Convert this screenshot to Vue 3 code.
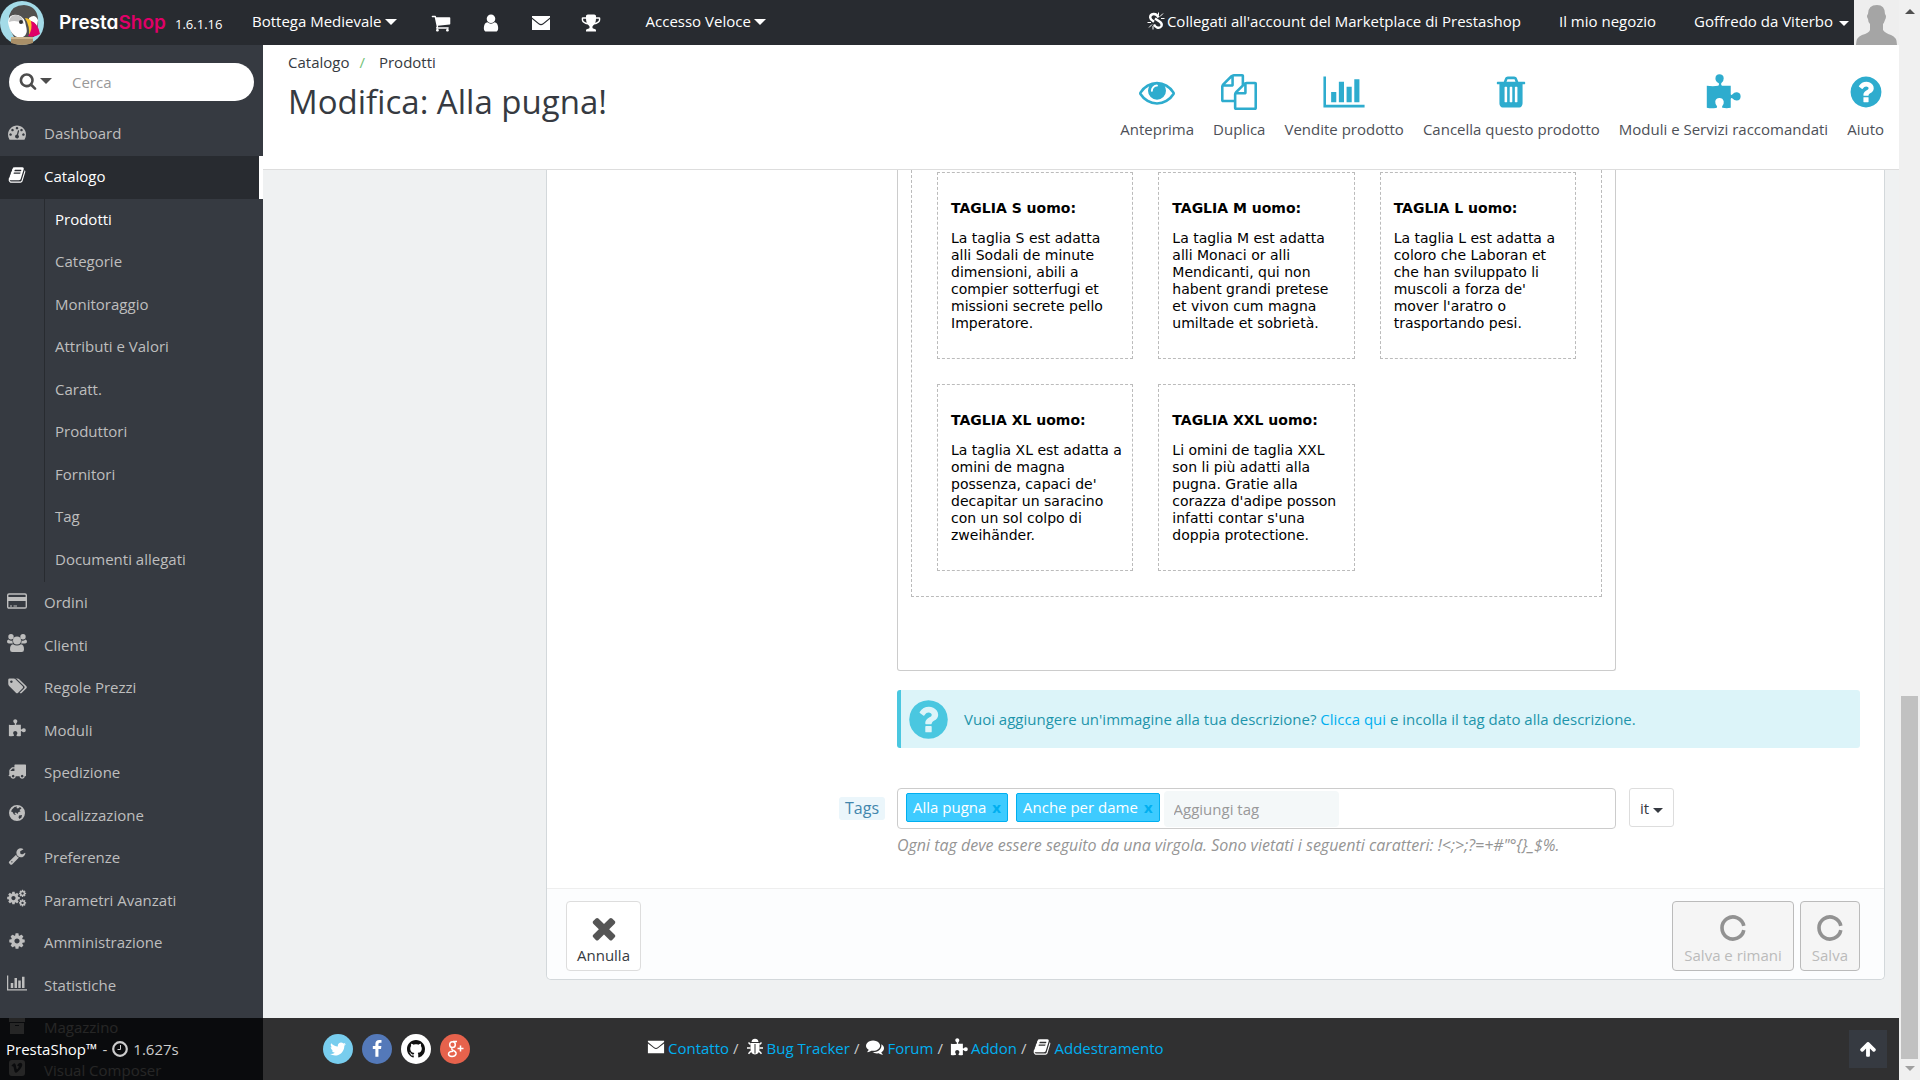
<template>
  <div class="window">
    <div class="page">
      <header class="header">
        <a href="#" class="brand">
          <svg class="puffin" viewBox="0 0 45 45">
            <circle cx="22" cy="23" r="22" fill="#a4dbe8" />
            <path d="M9 16Q12 5 24 5Q37 6 38 19Q39 30 34 37H14Q8 28 9 16z" fill="#51504f" />
            <path d="M8 22Q9 13 18 15Q25 17 26 26Q29 36 20 38Q10 36 8 22z" fill="#fff" />
            <path d="M9 22Q10 14 17 15Q23 16 24 24Q16 19 9 22z" fill="#c4c4c4" />
            <path d="M29 18Q35 13 38 20L37 27Q33 20 29 22z" fill="#fff" />
            <circle cx="21" cy="22" r="2" fill="#333" />
            <path d="M25 18Q31 18 33 25Q34 31 29 36Q30 26 25 18z" fill="#f7c32e" />
            <path d="M31 21Q38 23 40 34Q34 38 28 36Q33 30 31 21z" fill="#df0067" />
            <path d="M11 37H33V43Q22 47 11 43z" fill="#a98f68" />
            <path d="M11 37H33V39H11z" fill="#cbb48c" />
          </svg>
          <span class="wordmark">Presta<b>Shop</b></span>
        </a>
        <span class="version">1.6.1.16</span>
        <a href="#" class="shop">Bottega Medievale<i class="caret"></i></a>
        <nav class="notifs">
          <a v-for="n in ['cart', 'user', 'envelope', 'trophy']" :key="n" href="#"><Icon :name="n" class="ic20" /></a>
        </nav>
        <a href="#" class="quick">Accesso Veloce<i class="caret"></i></a>
        <a href="#" class="market"><Icon name="unlink" class="ic18" />Collegati all'account del Marketplace di Prestashop</a>
        <a href="#" class="myshop">Il mio negozio</a>
        <a href="#" class="employee">Goffredo da Viterbo<i class="caret small"></i></a>
        <svg class="avatar" viewBox="0 0 45 45">
          <path fill="#eee" d="M0 0h45v45H0z" />
          <path fill="#a5a5a5" d="M23 5q8 0 8 9q2 2 0 6q-1 3-2 4v6q2 3 8 5q6 2 6 10H2q0-8 6-10q7-2 8-5v-6q-2-2-2-5q-2-3 0-5q0-9 9-9z" />
        </svg>
      </header>

      <div class="body">
        <aside class="sidebar">
          <form class="search" @submit.prevent>
            <button type="button" aria-label="Filtro"><Icon name="search" class="ic18" /><i class="caret"></i></button>
            <input type="text" placeholder="Cerca" aria-label="Cerca" />
          </form>
          <ul class="menu top">
            <li><a href="#"><Icon name="dashboard" class="menu-icon" />Dashboard</a></li>
            <li class="active"><a href="#"><Icon name="book" class="menu-icon" />Catalogo</a></li>
          </ul>
          <ul class="submenu">
            <li v-for="(s, i) in submenu" :key="s" :class="{ current: i === 0 }"><a href="#">{{ s }}</a></li>
          </ul>
          <ul class="menu">
            <li v-for="m in menu" :key="m.label"><a href="#"><Icon :name="m.icon" class="menu-icon" />{{ m.label }}</a></li>
          </ul>
        </aside>

        <main class="main">
          <div class="page-head">
            <div class="heading">
              <div class="breadcrumb"><a href="#">Catalogo</a><span class="sep">/</span><a href="#">Prodotti</a></div>
              <h1>Modifica: Alla pugna!</h1>
            </div>
            <div class="toolbar">
              <a v-for="t in toolbar" :key="t.label" href="#">
                <Icon :name="t.icon" class="tool-icon" />
                <span>{{ t.label }}</span>
              </a>
            </div>
          </div>

          <form class="panel" @submit.prevent>
            <div class="row">
              <div class="editor">
                <div class="sizes">
                  <div v-for="s in sizes" :key="s.title" class="size">
                    <h3>{{ s.title }}</h3>
                    <p>{{ s.text }}</p>
                  </div>
                </div>
              </div>
            </div>

            <div class="alert">
              <Icon name="question" class="alert-icon" />
              <p>Vuoi aggiungere un'immagine alla tua descrizione? <a href="#">Clicca qui</a> e incolla il tag dato alla descrizione.</p>
            </div>

            <div class="row tags-row">
              <div class="label-cell"><label for="tags">Tags</label></div>
              <div class="tags-field">
                <span v-for="t in tags" :key="t" class="tag">{{ t }}<button type="button" @click="removeTag(t)">x</button></span>
                <input id="tags" type="text" placeholder="Aggiungi tag" />
              </div>
              <button type="button" class="lang">it<i class="caret small"></i></button>
            </div>
            <p class="help">Ogni tag deve essere seguito da una virgola. Sono vietati i seguenti caratteri: !&lt;;&gt;;?=+#"°{}_$%.</p>

            <div class="panel-footer">
              <button type="button" class="btn"><Icon name="times" class="btn-icon" />Annulla</button>
              <div class="save">
                <button type="submit" class="btn" disabled><Icon name="spinner" class="btn-icon" />Salva e rimani</button>
                <button type="submit" class="btn" disabled><Icon name="spinner" class="btn-icon" />Salva</button>
              </div>
            </div>
          </form>
        </main>
      </div>

      <footer class="footer">
        <div class="timing"><strong>PrestaShop™</strong> - <Icon name="clock" class="ic16" /> 1.627s</div>
        <div class="social">
          <a v-for="s in social" :key="s" href="#" :class="s" :aria-label="s"><Icon :name="s" class="social-icon" /></a>
        </div>
        <nav class="links">
          <template v-for="(l, i) in links" :key="l.label">
            <span v-if="i" class="slash">/</span>
            <Icon :name="l.icon" class="ic18" /><a href="#">{{ l.label }}</a>
          </template>
        </nav>
        <button type="button" class="go-top" aria-label="Torna su"><Icon name="arrowUp" class="ic18" /></button>
      </footer>
    </div>

    <div class="scrollbar">
      <i class="arrow up"></i>
      <div class="thumb"></div>
      <i class="arrow down"></i>
    </div>
  </div>
</template>

<script setup>
import { h, ref } from 'vue'

const cog = 'M1152 896q0-106-75-181t-181-75-181 75-75 181 75 181 181 75 181-75 75-181zm512-109v222q0 12-8 23t-20 13l-185 28q-19 54-39 91 35 50 107 138 10 12 10 25t-9 23q-27 37-99 108t-94 71q-12 0-26-9l-138-108q-44 23-91 38-16 136-29 186-7 28-36 28h-222q-14 0-24.5-8.5t-11.5-21.5l-28-184q-49-16-90-37l-141 107q-10 9-25 9-14 0-25-11-126-114-165-168-7-10-7-23 0-12 8-23 15-21 51-66.5t54-70.5q-27-50-41-99l-183-27q-13-2-21-12.5t-8-23.5v-222q0-12 8-23t19-13l186-28q14-46 39-92-40-57-107-138-10-12-10-24 0-10 9-23 26-36 98.5-107.5t94.5-71.5q13 0 26 10l138 107q44-23 91-38 16-136 29-186 7-28 36-28h222q14 0 24.5 8.5t11.5 21.5l28 184q49 16 90 37l142-107q9-9 24-9 13 0 25 10 129 119 165 170 7 8 7 22 0 12-8 23-15 21-51 66.5t-54 70.5q26 50 41 98l183 28q13 2 21 12.5t8 23.5z'

// box: viewBox, d: filled shape, s: stroked shape, w: stroke width
const icons = {
  cart: { d: 'M704 1536q0 52-38 90t-90 38-90-38-38-90 38-90 90-38 90 38 38 90zm896 0q0 52-38 90t-90 38-90-38-38-90 38-90 90-38 90 38 38 90zm128-1088v512q0 24-16.5 42.5t-40.5 21.5l-1044 122q13 60 13 70 0 16-24 64h920q26 0 45 19t19 45-19 45-45 19h-1024q-26 0-45-19t-19-45q0-11 8-31.5t16-36 21.5-40 15.5-29.5l-177-823h-204q-26 0-45-19t-19-45 19-45 45-19h256q16 0 28.5 6.5t19.5 15.5 13 24.5 8 26 5.5 29.5 4.5 26h1201q26 0 45 19t19 45z' },
  user: { d: 'M1536 1399q0 109-62.5 187t-150.5 78h-854q-88 0-150.5-78t-62.5-187q0-85 8.5-160.5t31.5-152 58.5-131 94-89 134.5-34.5q131 128 313 128t313-128q76 0 134.5 34.5t94 89 58.5 131 31.5 152 8.5 160.5zm-256-887q0 159-112.5 271.5t-271.5 112.5-271.5-112.5-112.5-271.5 112.5-271.5 271.5-112.5 271.5 112.5 112.5 271.5z' },
  envelope: { box: '0 0 20 20', d: 'M1 3H19V4.5L12 10.2Q10 11.8 8 10.2L1 4.5zM1 6L7.5 11.2Q10 13.2 12.5 11.2L19 6V17H1z' },
  trophy: { d: 'M522 883q-74-162-74-371h-256v96q0 78 94.5 162t235.5 113zm1078-275v-96h-256q0 209-74 371 141-29 235.5-113t94.5-162zm128-128v128q0 71-41.5 143t-112 130-173 97.5-215.5 44.5q-42 54-95 95-38 34-52.5 72.5t-14.5 89.5q0 54 30.5 91t97.5 37q75 0 133.5 45.5t58.5 114.5v64q0 14-9 23t-23 9h-832q-14 0-23-9t-9-23v-64q0-69 58.5-114.5t133.5-45.5q67 0 97.5-37t30.5-91q0-51-14.5-89.5t-52.5-72.5q-53-41-95-95-113-5-215.5-44.5t-173-97.5-112-130-41.5-143v-128q0-40 28-68t68-28h288v-96q0-66 47-113t113-47h576q66 0 113 47t47 113v96h288q40 0 68 28t28 68z' },
  unlink: { box: '0 0 18 18', s: 'M11.500 5.500Q10 1.800 6.500 2Q3 2.500 3.200 5.500Q3.500 7.500 6 9L7 9.800M8 6.500L12.500 9.500Q15.500 11.500 14.500 14Q13 16.500 10 15.500Q8 14.500 7 12.500', w: 2.4, s2: 'M11.500 3.500V0.500M13 4.500L16 1.500M14 6.500H17.500M6 14V17.500M5 12.500L2 15.500M4 10.500H0.500' },
  search: { d: 'M1216 832q0-185-131.5-316.5t-316.5-131.5-316.5 131.5-131.5 316.5 131.5 316.5 316.5 131.5 316.5-131.5 131.5-316.5zm512 832q0 52-38 90t-90 38q-54 0-90-38l-343-342q-179 124-399 124-143 0-273.5-55.5t-225-150-150-225-55.5-273.5 55.5-273.5 150-225 225-150 273.5-55.5 273.5 55.5 225 150 150 225 55.5 273.5q0 220-124 399l343 343q37 37 37 90z' },
  dashboard: { d: 'M384 1152q0-53-37.5-90.5t-90.5-37.5-90.5 37.5-37.5 90.5 37.5 90.5 90.5 37.5 90.5-37.5 37.5-90.5zm192-448q0-53-37.5-90.5t-90.5-37.5-90.5 37.5-37.5 90.5 37.5 90.5 90.5 37.5 90.5-37.5 37.5-90.5zm428 481l101-382q6-26-7.5-48.5t-38.5-29.5-48 6.5-30 39.5l-101 382q-60 5-107 43.5t-63 98.5q-20 77 20 146t117 89 146-20 89-117q16-60-6-117t-72-91zm660-33q0-53-37.5-90.5t-90.5-37.5-90.5 37.5-37.5 90.5 37.5 90.5 90.5 37.5 90.5-37.5 37.5-90.5zm-640-640q0-53-37.5-90.5t-90.5-37.5-90.5 37.5-37.5 90.5 37.5 90.5 90.5 37.5 90.5-37.5 37.5-90.5zm448 192q0-53-37.5-90.5t-90.5-37.5-90.5 37.5-37.5 90.5 37.5 90.5 90.5 37.5 90.5-37.5 37.5-90.5zm320 448q0 261-141 483-19 29-54 29h-1402q-35 0-54-29-141-221-141-483 0-182 71-348t191-286 286-191 348-71 348 71 286 191 191 286 71 348z' },
  book: { d: 'M1703 478q40 57 18 129l-275 906q-19 64-76.5 107.5t-122.5 43.5h-923q-77 0-148.5-53.5t-99.5-131.5q-24-67-2-127 0-4 3-27t4-37q1-8-3-21.5t-3-19.5q2-11 8-21t16.5-23.5 16.5-23.5q23-38 45-91.5t30-91.5q3-10 .5-30t-.5-28q3-11 17-28t17-23q21-36 42-92t25-90q1-9-2.5-32t.5-28q4-13 22-30.5t22-22.5q19-26 42.5-84.5t27.5-96.5q1-8-3-25.5t-2-26.5q2-8 9-18t18-23 17-21q8-12 16.5-30.5t15-35 16-36 19.5-32 26.5-23.5 36-11.5 47.5 5.5l-1 3q38-9 51-9h761q74 0 114 56t18 130l-274 906q-36 119-71.5 153.5t-128.5 34.5h-869q-27 0-38 15-11 16-1 43 24 70 144 70h923q29 0 56-15.5t35-41.5l300-987q7-22 5-57 38 15 59 43zm-1064 2q-4 13 2 22.5t20 9.5h608q13 0 25.5-9.5t16.5-22.5l21-64q4-13-2-22.5t-20-9.5h-608q-13 0-25.5 9.5t-16.5 22.5zm-83 256q-4 13 2 22.500t20 9.500h608q13 0 25.500-9.500t16.500-22.500l21-64q4-13-2-22.500t-20-9.500h-608q-13 0-25.500 9.500t-16.500 22.500z' },
  card: { box: '0 0 20 18', d: 'M1 5H19V9H1zM3 13.500H5V14.500H3zM6.500 13.500H10V14.500H6.500z', s: 'M2 2H18Q19.300 2 19.300 3.300V14.700Q19.300 16 18 16H2Q.7 16 .7 14.700V3.300Q.7 2 2 2z', w: 1.4 },
  group: { box: '0 0 20 18', d: 'M10 2.500a4 4 0 1 1 0 8a4 4 0 1 1 0-8zM4 0a2.700 2.700 0 1 1 0 5.400a2.700 2.700 0 1 1 0-5.400zM16 0a2.700 2.700 0 1 1 0 5.400a2.700 2.700 0 1 1 0-5.400zM1.500 5.500Q4 7.500 5.500 6.200Q5.200 8 6 9.500H2Q0 9.500 0 7.800Q0 6 1.500 5.500zM18.500 5.500Q16 7.500 14.500 6.200Q14.800 8 14 9.500H18Q20 9.500 20 7.800Q20 6 18.500 5.500zM6 10.200Q10 13 14 10.200Q17 10.500 17 15.500Q17 18 14.700 18H5.300Q3 18 3 15.500Q3 10.500 6 10.200z' },
  tags: { box: '0 0 2048 1792', d: 'M576 448q0-53-37.500-90.500t-90.500-37.500-90.500 37.500-37.500 90.500 37.500 90.500 90.500 37.500 90.500-37.500 37.500-90.500zm1067 576q0 53-37 90l-491 492q-39 37-91 37-53 0-90-37l-715-716q-38-37-64.500-101t-26.500-117v-416q0-52 38-90t90-38h416q53 0 117 26.500t102 64.500l715 714q37 39 37 91zm384 0q0 53-37 90l-491 492q-39 37-91 37-36 0-59-14t-53-45l470-470q37-37 37-90 0-52-37-91l-715-714q-38-38-102-64.500t-117-26.500h224q53 0 117 26.500t102 64.500l715 714q37 39 37 91z' },
  puzzle: { box: '0 0 20 20', d: 'M7.300 6.500Q8 6.500 7.700 5.200Q5.600 3.800 5.800 2.300Q6 .2 8 .2Q10.200 .2 10.400 2.300Q10.500 3.900 9 5.200Q8.800 6.500 9.500 6.500H14.300V11.200Q14.500 12 15.300 11.300Q16.300 10 17.800 10.200Q19.800 10.400 19.800 12.500Q19.700 14.600 17.700 14.700Q16.300 14.800 15.300 13.600Q14.500 13 14.300 13.900V18.800Q12 19.300 9.800 18.800Q9 18.600 9.700 17.600Q10.600 16.600 10.400 15.300Q10 13.400 8 13.400Q5.900 13.500 5.700 15.300Q5.600 16.500 6.500 17.600Q7.200 18.700 6 18.900Q3.500 19.300 1 18.800V6.500Q4.500 7 7.300 6.500z' },
  truck: { d: 'M640 1408q0-52-38-90t-90-38-90 38-38 90 38 90 90 38 90-38 38-90zm-384-512h384v-256h-158q-13 0-22 9l-195 195q-9 9-9 22v30zm1280 512q0-52-38-90t-90-38-90 38-38 90 38 90 90 38 90-38 38-90zm256-1088v1024q0 15-4 26.500t-13.500 18.500-16.500 11.500-23.500 6-22.500 2-25.500 0-22.500-.5q0 106-75 181t-181 75-181-75-75-181h-384q0 106-75 181t-181 75-181-75-75-181h-64q-3 0-22.500.5t-25.500 0-22.500-2-23.500-6-16.500-11.500-13.500-18.500-4-26.500q0-26 19-45t45-19v-320q0-8-.5-35t0-38 2.500-34.500 6.500-37 14-30.500 22.500-30l198-198q19-19 50.500-32t58.500-13h160v-192q0-26 19-45t45-19h1024q26 0 45 19t19 45z' },
  globe: { box: '0 0 18 18', rule: 'evenodd', d: 'M9 1a8 8 0 1 1 0 16a8 8 0 1 1 0-16zM6.500 3L9 2.500L8.500 4L10 4.500L12 3L13.500 4.500L11.500 6L12.500 7.500L10.500 8L9.500 10L8 8.500L6.500 9L8 11L6 10.500L4.500 8L3 7.500L4 5.500zM11 11.500L14 11L13.500 13.500L11.500 15L10.500 13.500z' },
  wrench: { d: 'M448 1472q0-26-19-45t-45-19-45 19-19 45 19 45 45 19 45-19 19-45zm644-420l-682 682q-37 37-90 37-52 0-91-37l-106-108q-38-36-38-90 0-53 38-91l681-681q39 98 114.500 173.500t173.500 114.500zm634-435q0 39-23 106-47 134-164.500 217.500t-258.500 83.500q-185 0-316.500-131.500t-131.500-316.500 131.500-316.500 316.500-131.500q58 0 121.500 16.500t107.500 46.500q16 11 16 28t-16 28l-293 169v224l193 107q5-3 79-48.500t135.500-81 70.500-35.500q15 0 23.500 10t8.500 25z' },
  cog: { d: cog },
  cogs: { box: '0 0 2048 1792', parts: [[cog, 'translate(-90 150) scale(.84)'], [cog, 'translate(1160 0) scale(.48)'], [cog, 'translate(1160 960) scale(.48)']] },
  chart: { box: '0 0 2048 1792', d: 'M640 896v512h-256v-512h256zm384-512v1024h-256v-1024h256zm1024 1152v128h-2048v-1536h128v1408h1920zm-640-896v768h-256v-768h256zm384-384v1152h-256v-1152h256z' },
  archive: { box: '0 0 18 18', rule: 'evenodd', d: 'M1 1H17V5H1zM2 6H16V17H2zM7 8V9H11V8z' },
  vimeo: { box: '0 0 18 18', rule: 'evenodd', d: 'M4 1H14Q17 1 17 4V14Q17 17 14 17H4Q1 17 1 14V4Q1 1 4 1zM3.500 6.500L4 7.500Q5 6.800 5.500 8L6.500 12.500Q7.500 15 10 12.500Q14.500 8 14.300 5.500Q13.500 2.500 10 5Q9.300 6 9.300 7Q11.500 6.500 10.500 8.500Q9 11.500 8.500 9.500L7.800 6Q7 3 5 5z' },
  clock: { box: '0 0 16 16', s: 'M8 1.200a6.800 6.800 0 1 1 0 13.600a6.800 6.800 0 1 1 0-13.600z', w: 2.2, s2: 'M8.500 4V8.500H5.500' },
  eye: { d: 'M1664 960q-152-236-381-353 61 104 61 225 0 185-131.500 316.500t-316.500 131.500-316.500-131.500-131.500-316.500q0-121 61-225-229 117-381 353 133 205 333.500 326.500t434.500 121.500 434.500-121.500 333.500-326.500zm-720-384q0-20-14-34t-34-14q-125 0-214.500 89.500t-89.500 214.500q0 20 14 34t34 14 34-14 14-34q0-86 61-147t147-61q20 0 34-14t14-34zm848 384q0 34-20 69-140 230-376.500 368.500t-499.500 138.500-499.500-139-376.500-368q-20-35-20-69t20-69q140-229 376.500-368t499.500-139 499.500 139 376.500 368q20 35 20 69z' },
  files: { d: 'M1696 384q40 0 68 28t28 68v1216q0 40-28 68t-68 28h-960q-40 0-68-28t-28-68v-288h-544q-40 0-68-28t-28-68v-672q0-40 20-88t48-76l408-408q28-28 76-48t88-20h416q40 0 68 28t28 68v328q68-40 128-40h416zm-544 213l-299 299h299v-299zm-640-384l-299 299h299v-299zm196 647l316-316v-416h-384v416q0 40-28 68t-68 28h-416v640h512v-256q0-40 20-88t48-76zm956 804v-1152h-384v416q0 40-28 68t-68 28h-416v640h896z' },
  trash: { d: 'M704 1376v-704q0-14-9-23t-23-9h-64q-14 0-23 9t-9 23v704q0 14 9 23t23 9h64q14 0 23-9t9-23zm256 0v-704q0-14-9-23t-23-9h-64q-14 0-23 9t-9 23v704q0 14 9 23t23 9h64q14 0 23-9t9-23zm256 0v-704q0-14-9-23t-23-9h-64q-14 0-23 9t-9 23v704q0 14 9 23t23 9h64q14 0 23-9t9-23zm-544-992h448l-48-117q-7-9-17-11h-317q-10 2-17 11zm928 32v64q0 14-9 23t-23 9h-96v948q0 83-47 143.500t-113 60.500h-832q-66 0-113-58.500t-47-141.500v-952h-96q-14 0-23-9t-9-23v-64q0-14 9-23t23-9h309l70-167q15-37 54-63t79-26h320q40 0 79 26t54 63l70 167h309q14 0 23 9t9 23z' },
  question: { d: 'M1024 1376v-192q0-14-9-23t-23-9h-192q-14 0-23 9t-9 23v192q0 14 9 23t23 9h192q14 0 23-9t9-23zm256-672q0-88-55.500-163t-138.500-116-170-41q-243 0-371 213-15 24 8 42l132 100q7 6 19 6 16 0 25-12 53-68 86-92 34-24 86-24 48 0 85.500 26t37.500 59q0 38-20 61t-68 45q-63 28-115.500 86.500t-52.500 125.500v36q0 14 9 23t23 9h192q14 0 23-9t9-23q0-19 21.500-49.500t54.500-49.500q32-18 49-28.500t46-35 44.500-48 28-60.500 12.500-81zm384 192q0 209-103 385.500t-279.500 279.500-385.500 103-385.500-103-279.500-279.500-103-385.500 103-385.500 279.500-279.500 385.500-103 385.500 103 279.500 279.500 103 385.500z' },
  times: { d: 'M1490 1322q0 40-28 68l-136 136q-28 28-68 28t-68-28l-294-294-294 294q-28 28-68 28t-68-28l-136-136q-28-28-28-68t28-68l294-294-294-294q-28-28-28-68t28-68l136-136q28-28 68-28t68 28l294 294 294-294q28-28 68-28t68 28l136 136q28 28 28 68t-28 68l-294 294 294 294q28 28 28 68z' },
  spinner: { box: '0 0 34 34', s: 'M27.800 14.900A11 11 0 1 0 27.800 19.100', w: 3.6 },
  bug: { box: '0 0 18 18', rule: 'evenodd', d: 'M5.500 4Q6 .8 9 .8Q12 .8 12.500 4zM4.500 5H13.500V11Q13.300 16 9 16.500Q4.700 16 4.500 11zM8.500 6V15.500H9.500V6z', s: 'M4.500 6.500L2.500 4.500M13.500 6.500L15.500 4.500M4.500 10H1M13.500 10H17M5 13L2.500 15.800M13 13L15.500 15.800', w: 1.5 },
  comments: { d: 'M1408 768q0 139-94 257t-256.500 186.500-353.500 68.500q-86 0-176-16-124 88-278 128-36 9-86 16h-3q-11 0-20.500-8t-11.500-21q-1-3-1-6.500t.5-6.500 2-6l2.500-5 3.500-5.500 4-5 4.500-5 4-4.500q5-6 23-25t26-29.500 22.500-29 25-38.500 20.500-44q-124-72-195-177t-71-224q0-139 94-257t256.500-186.500 353.500-68.500 353.500 68.500 256.500 186.500 94 257zm384 256q0 120-71 224.500t-195 176.500q10 24 20.500 44t25 38.500 22.500 29 26 29.500 23 25q1 1 4 4.500t4.500 5 4 5 3.500 5.500l2.500 5 2 6 .5 6.500-1 6.500q-3 14-13 22t-22 7q-50-7-86-16-154-40-278-128-90 16-176 16-271 0-472-132 58 4 88 4 161 0 309-45t264-129q125-92 192-212t67-254q0-77-23-152 129 71 204 178t75 230z' },
  arrowUp: { d: 'M1675 971q0 51-37 90l-75 75q-38 38-91 38-54 0-90-38l-294-293v704q0 52-37.500 84.500t-90.500 32.500h-128q-53 0-90.500-32.500t-37.500-84.500v-704l-294 293q-36 38-90 38t-90-38l-75-75q-38-38-38-90 0-53 38-91l651-651q35-37 90-37 54 0 91 37l651 651q37 39 37 91z' },
  twitter: { d: 'M1684 408q-67 98-162 167 1 14 1 42 0 130-38 259.500t-115.500 248.500-184.500 210.500-258 146-323 54.500q-271 0-496-145 35 4 78 4 225 0 401-138-105-2-188-64.500t-114-159.500q33 5 61 5 43 0 85-11-112-23-185.500-111.500t-73.500-205.500v-4q68 38 146 41-66-44-105-115t-39-154q0-88 44-163 121 149 294.500 238.500t371.500 99.500q-8-38-8-74 0-134 94.500-228.500t228.500-94.500q140 0 236 102 109-21 205-78-37 115-142 178 93-10 186-50z' },
  facebook: { d: 'M1343 12v264h-157q-86 0-116 36t-30 108v189h293l-39 296h-254v759h-306v-759h-255v-296h255v-218q0-186 104-288.500t277-102.500q147 0 228 12z' },
  github: { box: '0 0 16 16', d: 'M8 0C3.580 0 0 3.580 0 8c0 3.540 2.290 6.530 5.470 7.590.4.070.55-.17.55-.38 0-.19-.01-.82-.01-1.490-2.010.37-2.530-.49-2.690-.94-.09-.23-.48-.94-.82-1.130-.28-.15-.68-.52-.01-.53.63-.01 1.080.58 1.230.82.72 1.210 1.870.87 2.330.66.07-.52.28-.87.51-1.070-1.780-.2-3.640-.89-3.640-3.950 0-.87.31-1.590.82-2.150-.08-.2-.36-1.020.08-2.120 0 0 .67-.21 2.200.82.64-.18 1.320-.27 2-.27s1.360.09 2 .27c1.530-1.040 2.200-.82 2.200-.82.44 1.100.16 1.920.08 2.120.51.56.82 1.270.82 2.150 0 3.070-1.870 3.750-3.650 3.950.29.25.54.73.54 1.480 0 1.070-.01 1.930-.01 2.200 0 .21.15.46.55.38A8.010 8.010 0 0 0 16 8c0-4.420-3.580-8-8-8z' },
  google: { box: '0 0 18 18', s: 'M6.500 1.800Q9.300 1.800 9.300 4.700Q9.300 7.500 6.500 7.500Q3.700 7.500 3.700 4.700Q3.700 1.800 6.500 1.800zM7 1.500H11M6 8Q5 9.500 7.500 10.500Q10.500 12 10 14Q9.300 16.500 6 16.500Q2.500 16.300 2.500 14Q2.700 11.500 7 11.300M14.500 5.500V11.500M11.500 8.500H17.500', w: 1.5 }
}

const Icon = (props) => {
  const i = icons[props.name]
  const kids = []
  if (i.d) kids.push(h('path', { d: i.d, fill: 'currentColor', 'fill-rule': i.rule }))
  if (i.s) kids.push(h('path', { d: i.s, fill: 'none', stroke: 'currentColor', 'stroke-width': i.w }))
  if (i.s2) kids.push(h('path', { d: i.s2, fill: 'none', stroke: 'currentColor', 'stroke-width': 1 }))
  for (const [d, transform] of i.parts || []) kids.push(h('path', { d, transform, fill: 'currentColor' }))
  return h('svg', { viewBox: i.box || '0 0 1792 1792', 'aria-hidden': 'true' }, kids)
}
Icon.props = ['name']

const submenu = ['Prodotti', 'Categorie', 'Monitoraggio', 'Attributi e Valori', 'Caratt.', 'Produttori', 'Fornitori', 'Tag', 'Documenti allegati']

const menu = [
  { icon: 'card', label: 'Ordini' },
  { icon: 'group', label: 'Clienti' },
  { icon: 'tags', label: 'Regole Prezzi' },
  { icon: 'puzzle', label: 'Moduli' },
  { icon: 'truck', label: 'Spedizione' },
  { icon: 'globe', label: 'Localizzazione' },
  { icon: 'wrench', label: 'Preferenze' },
  { icon: 'cogs', label: 'Parametri Avanzati' },
  { icon: 'cog', label: 'Amministrazione' },
  { icon: 'chart', label: 'Statistiche' },
  { icon: 'archive', label: 'Magazzino' },
  { icon: 'vimeo', label: 'Visual Composer' }
]

const toolbar = [
  { icon: 'eye', label: 'Anteprima' },
  { icon: 'files', label: 'Duplica' },
  { icon: 'chart', label: 'Vendite prodotto' },
  { icon: 'trash', label: 'Cancella questo prodotto' },
  { icon: 'puzzle', label: 'Moduli e Servizi raccomandati' },
  { icon: 'question', label: 'Aiuto' }
]

const sizes = [
  { title: 'TAGLIA S uomo:', text: 'La taglia S est adatta\nalli Sodali de minute\ndimensioni, abili a\ncompier sotterfugi et\nmissioni secrete pello\nImperatore.' },
  { title: 'TAGLIA M uomo:', text: 'La taglia M est adatta\nalli Monaci or alli\nMendicanti, qui non\nhabent grandi pretese\net vivon cum magna\numiltade et sobrietà.' },
  { title: 'TAGLIA L uomo:', text: 'La taglia L est adatta a\ncoloro che Laboran et\nche han sviluppato li\nmuscoli a forza de\'\nmover l\'aratro o\ntrasportando pesi.' },
  { title: 'TAGLIA XL uomo:', text: 'La taglia XL est adatta a\nomini de magna\npossenza, capaci de\'\ndecapitar un saracino\ncon un sol colpo di\nzweihänder.' },
  { title: 'TAGLIA XXL uomo:', text: 'Li omini de taglia XXL\nson li più adatti alla\npugna. Gratie alla\ncorazza d\'adipe posson\ninfatti contar s\'una\ndoppia protectione.' }
]

const tags = ref(['Alla pugna', 'Anche per dame'])
const removeTag = (t) => {
  tags.value = tags.value.filter((x) => x !== t)
}

const social = ['twitter', 'facebook', 'github', 'google']

const links = [
  { icon: 'envelope', label: 'Contatto' },
  { icon: 'bug', label: 'Bug Tracker' },
  { icon: 'comments', label: 'Forum' },
  { icon: 'puzzle', label: 'Addon' },
  { icon: 'book', label: 'Addestramento' }
]
</script>

<style>
body {
  margin: 0;
  overflow: hidden;
}
</style>

<style scoped>
.window {
  display: flex;
  height: 100vh;
  overflow: hidden;
  font: 15px/20px "Open Sans", sans-serif;
  color: #363a41;
  background: #eff1f2;
}
.window * {
  box-sizing: border-box;
}
a {
  color: inherit;
  text-decoration: none;
}
button, input {
  font: inherit;
  color: inherit;
}
ul {
  list-style: none;
  margin: 0;
  padding: 0;
}
h1, h3, p {
  margin: 0;
}
svg {
  display: block;
  flex: none;
}
.ic16 {
  width: 16px;
  height: 16px;
}
.ic18 {
  width: 18px;
  height: 18px;
}
.ic20 {
  width: 20px;
  height: 20px;
}
.caret {
  display: inline-block;
  border: 6px solid transparent;
  border-top-color: currentColor;
  border-bottom: 0;
  margin-left: 3px;
  vertical-align: 2px;
}
.caret.small {
  border-width: 5px;
  border-bottom: 0;
  margin-left: 6px;
  vertical-align: 1px;
}

.page {
  position: relative;
  display: flex;
  flex-direction: column;
  flex: 1;
  min-width: 0;
}

/* header */
.header {
  display: flex;
  align-items: center;
  height: 45px;
  flex: none;
  background: #282b30;
  color: #fff;
  white-space: nowrap;
}
.header > a {
  padding-bottom: 4px;
}
.header > .brand {
  display: flex;
  align-items: center;
  padding: 0;
}
.puffin {
  width: 45px;
  height: 45px;
}
.wordmark {
  margin-left: 14px;
  width: 108px;
  font: 600 19px/24px Inter, sans-serif;
  font-feature-settings: "cv11";
}
.wordmark b {
  font-weight: 600;
  color: #df0067;
}
.version {
  margin-left: 8px;
  padding-top: 3px;
  width: 77px;
  font-size: 13px;
}
.notifs {
  display: flex;
  gap: 30px;
  margin: 0 45px 0 34px;
}
.market {
  display: flex;
  align-items: center;
  gap: 2px;
  margin-left: auto;
}
.myshop {
  margin: 0 38px;
}
.avatar {
  width: 45px;
  height: 45px;
  margin-left: 5px;
}

/* sidebar */
.body {
  display: flex;
  flex: 1;
  min-height: 0;
}
.sidebar {
  width: 263px;
  flex: none;
  overflow: hidden;
  background: #363a41;
  color: #bebebe;
}
.search {
  display: flex;
  align-items: center;
  height: 38px;
  margin: 18px 9px 12px;
  border-radius: 19px;
  background: #fff;
  color: #4d4d4d;
  overflow: hidden;
}
.search button {
  display: flex;
  align-items: center;
  width: 63px;
  padding: 0 0 2px 10px;
  border: 0;
  background: none;
}
.search input {
  flex: 1;
  min-width: 0;
  border: 0;
  padding: 0;
  background: none;
  outline: 0;
}
input::placeholder {
  color: #999;
  opacity: 1;
}
.menu li,
.submenu li {
  height: 43px;
}
.menu:not(.top) li:nth-child(even),
.submenu li:nth-child(even) {
  height: 42px;
}
.menu a {
  display: flex;
  align-items: center;
  gap: 17px;
  height: 100%;
  padding: 0 0 3px 7px;
}
.menu-icon {
  width: 20px;
  height: 18px;
  margin-bottom: 3px;
}
.menu .active {
  background: #282b30;
  color: #fff;
  border-right: 4px solid #fff;
}
.submenu {
  margin-left: 44px;
  border-left: 1px solid #282b30;
}
.submenu a {
  display: flex;
  align-items: center;
  height: 100%;
  padding: 0 0 4px 10px;
}
.submenu .current {
  color: #fff;
}

/* page head */
.main {
  flex: 1;
  min-width: 0;
}
.page-head {
  display: flex;
  justify-content: space-between;
  height: 125px;
  padding: 7px 15px 0 25px;
  background: #fff;
  border-bottom: 1px solid #ddd;
}
.sep {
  margin: 0 14px 0 10px;
  color: #72c279;
}
h1 {
  margin-top: 8px;
  font-size: 33px;
  line-height: 44px;
  font-weight: 400;
}
.toolbar {
  display: flex;
  gap: 19px;
  padding-top: 22px;
  color: #4d5057;
  white-space: nowrap;
}
.toolbar a {
  display: flex;
  flex-direction: column;
  align-items: center;
  gap: 9px;
}
.tool-icon {
  width: 42px;
  height: 36px;
  margin: 0 -3px;
  color: #2eacce;
}

/* panel */
.panel {
  margin: 0 14px 0 283px;
  background: #fff;
  border: 1px solid #d3d8db;
  border-top: 0;
  border-radius: 0 0 5px 5px;
}
.row {
  display: grid;
  grid-template-columns: 338px minmax(0, 1fr) 232px;
  column-gap: 12px;
  padding-right: 24px;
}
.editor {
  grid-column: 2;
  border: 1px solid #ccc;
  border-top: 0;
  border-radius: 0 0 3px 3px;
  padding: 0 13px 73px;
  color: #000;
  font: 14px/17px Verdana, "DejaVu Sans", sans-serif;
}
.sizes {
  display: grid;
  grid-template-columns: repeat(3, 1fr);
  gap: 25px;
  padding: 2px 25px 25px;
  border: 1px dashed #bbb;
  border-top: 0;
}
.size {
  border: 1px dashed #bbb;
  padding: 27px 0 26px 13px;
  white-space: pre;
}
.size h3 {
  margin-bottom: 13px;
  font-size: 14px;
  line-height: 17px;
}
.alert {
  display: flex;
  align-items: center;
  gap: 13px;
  height: 58px;
  margin: 19px 24px 40px 350px;
  padding-left: 5px;
  border-left: 4px solid #4ac7e0;
  border-radius: 3px;
  background: #dcf4f9;
  color: #1e94ab;
}
.alert a {
  color: #00aff0;
}
.alert-icon {
  width: 45px;
  height: 45px;
  color: #4ac7e0;
}
.label-cell {
  display: flex;
  align-items: center;
  justify-content: flex-end;
}
.label-cell label {
  padding: 1px 6px 2px;
  border-radius: 3px;
  background: #ebf6fb;
  color: #4286ad;
  font-size: 16px;
}
.tags-field {
  display: flex;
  align-items: center;
  gap: 8px;
  height: 41px;
  padding: 0 8px;
  border: 1px solid #ccc;
  border-radius: 4px;
}
.tag {
  display: flex;
  gap: 6px;
  height: 29px;
  padding: 3px 6px;
  margin-bottom: 3px;
  border: 1px solid #00aff0;
  border-radius: 2px;
  background: #3ecbff;
  color: #fff;
  line-height: 20px;
  white-space: nowrap;
}
.tag button {
  border: 0;
  padding: 0;
  background: none;
  color: #00aff0;
  font-weight: 700;
  line-height: 20px;
}
.tags-field input {
  width: 175px;
  height: 36px;
  margin-left: -4px;
  padding: 0 10px;
  border: 0;
  border-radius: 4px;
  background: #f4f8f9;
}
.lang {
  justify-self: start;
  width: 45px;
  height: 39px;
  margin-left: 1px;
  padding: 0;
  border: 1px solid #ddd;
  border-radius: 3px;
  background: #fff;
}
.lang .caret {
  margin-left: 4px;
}
.help {
  margin: 6px 24px 33px 350px;
  font-size: 16px;
  font-style: italic;
  color: #959595;
}
.panel-footer {
  display: flex;
  justify-content: space-between;
  align-items: flex-start;
  height: 91px;
  padding: 12px 24px 0 19px;
  border-top: 1px solid #eee;
  border-radius: 0 0 5px 5px;
  background: #fcfdfe;
}
.save {
  display: flex;
  gap: 6px;
}
.btn {
  display: flex;
  flex-direction: column;
  align-items: center;
  height: 70px;
  padding: 9px 10px 5px;
  border: 1px solid #ddd;
  border-radius: 4px;
  background: #fff;
}
.btn:disabled {
  padding: 9px 11px 5px;
  border-color: #bbb;
  background: #f5f5f5;
  color: #bbb;
}
.btn-icon {
  width: 34px;
  height: 34px;
  color: #555;
}
.btn:disabled .btn-icon {
  color: #929292;
}

/* footer */
.footer {
  position: absolute;
  left: 0;
  right: 0;
  bottom: 0;
  display: flex;
  align-items: center;
  height: 62px;
  background: rgba(0, 0, 0, 0.8);
  color: #ccc;
}
.timing {
  display: flex;
  align-items: center;
  gap: 5px;
  width: 323px;
  padding-left: 6px;
}
.timing strong {
  font-weight: 400;
  color: #fff;
}
.social {
  display: flex;
  gap: 9px;
  width: 324px;
}
.social a {
  display: flex;
  align-items: center;
  justify-content: center;
  width: 30px;
  height: 30px;
  border-radius: 50%;
  color: #fff;
}
.twitter {
  background: #78cdee;
}
.facebook {
  background: #5479b9;
}
.social .github {
  background: #fff;
  color: #111;
}
.google {
  background: #e6624c;
}
.social-icon {
  width: 18px;
  height: 18px;
}
.links {
  display: flex;
  align-items: center;
  padding-bottom: 2px;
}
.links svg {
  color: #fff;
  margin: 0 3px 3px 0;
}
.links a {
  color: #00aff0;
}
.slash {
  margin: 0 7px 0 4px;
}
.go-top {
  display: flex;
  align-items: center;
  justify-content: center;
  width: 38px;
  height: 38px;
  margin: 0 12px 0 auto;
  border: 0;
  padding: 0;
  background: #363a41;
  color: #fff;
}

.scrollbar {
  display: flex;
  flex-direction: column;
  align-items: center;
  justify-content: flex-end;
  width: 21px;
  flex: none;
  background: #f0f0f0;
}
.thumb {
  width: 17px;
  height: 363px;
  background: #c1c1c1;
}
.arrow {
  border: 5px solid transparent;
}
.arrow.up {
  margin: 4px 0 auto;
  border-bottom-color: #505050;
}
.arrow.down {
  margin: 7px 0 4px;
  border-top-color: #a0a0a0;
}
</style>
